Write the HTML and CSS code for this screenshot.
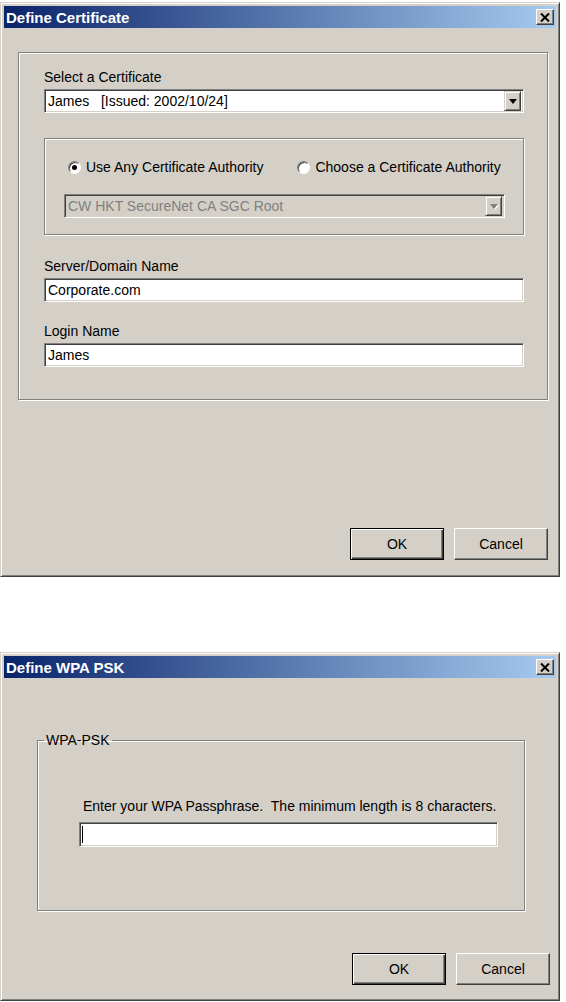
FILE: index.html
```html
<!DOCTYPE html>
<html lang="en">
<head>
  <meta charset="UTF-8">
  <title>Define Certificate / Define WPA PSK</title>
  <link rel="stylesheet" href="styles.css">
</head>
<body>

  <!-- certificate dialog -->
  <div class="window cert">
    <div class="titlebar">
      <span class="title">Define Certificate</span>
      <span class="close"><svg width="10" height="9" viewBox="0 0 10 9"><path d="M1 0.5 L9 8.5 M9 0.5 L1 8.5" stroke="#000" stroke-width="2"/></svg></span>
    </div>
    <div class="content">
      <div class="group main">
        <div class="label">Select a Certificate</div>
        <div class="combo">
          <span class="value">James&nbsp;&nbsp; [Issued: 2002/10/24]</span>
          <span class="drop"><i class="arrow"></i></span>
        </div>

        <div class="group ca">
          <div class="radios">
            <label class="radio"><span class="dot checked"></span>Use Any Certificate Authority</label>
            <label class="radio"><span class="dot"></span>Choose a Certificate Authority</label>
          </div>
          <div class="combo disabled">
            <span class="value">CW HKT SecureNet CA SGC Root</span>
            <span class="drop"><i class="arrow"></i></span>
          </div>
        </div>

        <div class="label gap">Server/Domain Name</div>
        <div class="field">Corporate.com</div>
        <div class="label gap-small">Login Name</div>
        <div class="field">James</div>
      </div>

      <div class="buttons">
        <button class="btn default">OK</button>
        <button class="btn">Cancel</button>
      </div>
    </div>
  </div>

  <!-- WPA PSK dialog -->
  <div class="window wpa">
    <div class="titlebar">
      <span class="title">Define WPA PSK</span>
      <span class="close"><svg width="10" height="9" viewBox="0 0 10 9"><path d="M1 0.5 L9 8.5 M9 0.5 L1 8.5" stroke="#000" stroke-width="2"/></svg></span>
    </div>
    <div class="content">
      <fieldset class="psk">
        <legend>WPA-PSK</legend>
        <div class="psk-body">
          <div class="hint">Enter your WPA Passphrase.&nbsp; The minimum length is 8 characters.</div>
          <div class="field wide"><span class="caret"></span></div>
        </div>
      </fieldset>

      <div class="buttons">
        <button class="btn default">OK</button>
        <button class="btn">Cancel</button>
      </div>
    </div>
  </div>

</body>
</html>
```

FILE: styles.css
```css
body {
  margin: 0;
  background-color: #fff;
  font-family: "Liberation Sans", Arial, sans-serif;
  font-size: 14px;
  color: #000;
}

.window {
  width: 560px;
  box-sizing: border-box;
  background-color: #d4d0c8;
  border: 1px solid;
  border-color: #d4d0c8 #404040 #404040 #d4d0c8;
  box-shadow: inset 1px 1px #fff, inset -1px -1px #808080;
  padding: 3px;
  display: flex;
  flex-direction: column;
}

.cert {
  height: 575px;
  margin-top: 2px;
}

.wpa {
  height: 349px;
  margin-top: 75px;
}

.titlebar {
  height: 22px;
  flex-shrink: 0;
  display: flex;
  align-items: center;
  justify-content: space-between;
  padding: 0 2px;
  background: linear-gradient(to right, #0a246a, #a6caf0);
}

.title {
  color: #fff;
  font-weight: bold;
  font-size: 15px;
}

.close {
  width: 18px;
  height: 16px;
  box-sizing: border-box;
  background-color: #d4d0c8;
  border: 1px solid;
  border-color: #fff #404040 #404040 #fff;
  box-shadow: inset -1px -1px #808080;
  display: flex;
  align-items: center;
  justify-content: center;
}

.content {
  flex: 1;
  display: flex;
  flex-direction: column;
}

.cert .content {
  padding: 24px 8px 13px 14px;
}

.wpa .content {
  padding: 0 6px 12px 0;
}

/* etched group boxes */
.group {
  border: 1px solid #808080;
  box-shadow: inset 1px 1px #fff, 1px 1px #fff;
  box-sizing: border-box;
}

.main {
  height: 348px;
  padding: 16px 23px 0 25px;
}

.ca {
  margin-top: 25px;
  padding: 20px 18px 16px 19px;
}

.label {
  line-height: 16px;
  margin-bottom: 4px;
}

.label.gap {
  margin-top: 23px;
}

.label.gap-small {
  margin-top: 21px;
}

/* sunken fields */
.combo,
.field {
  height: 24px;
  box-sizing: border-box;
  background-color: #fff;
  border: 1px solid;
  border-color: #808080 #fff #fff #808080;
  box-shadow: inset 1px 1px #404040, inset -1px -1px #d4d0c8;
  padding: 2px 2px 2px 3px;
  line-height: 19px;
  display: flex;
  align-items: center;
}

.combo .value {
  flex: 1;
}

.drop {
  width: 17px;
  height: 20px;
  box-sizing: border-box;
  background-color: #d4d0c8;
  border: 1px solid;
  border-color: #d4d0c8 #404040 #404040 #d4d0c8;
  box-shadow: inset 1px 1px #fff, inset -1px -1px #808080;
  display: flex;
  align-items: center;
  justify-content: center;
}

.arrow {
  width: 0;
  height: 0;
  border-left: 4px solid transparent;
  border-right: 4px solid transparent;
  border-top: 5px solid #000;
}

.combo.disabled {
  background-color: #d4d0c8;
  color: #808080;
}

.combo.disabled .arrow {
  border-top-color: #808080;
  filter: drop-shadow(1px 1px 0 #fff);
}

.radios {
  display: flex;
  gap: 34px;
  padding-left: 4px;
  margin-bottom: 19px;
  line-height: 16px;
}

.radio {
  display: flex;
  align-items: center;
  gap: 5px;
}

.dot {
  width: 13px;
  height: 13px;
  box-sizing: border-box;
  border-radius: 50%;
  border: 1px solid;
  border-color: #808080 #fff #fff #808080;
  box-shadow: inset 1px 1px #404040;
  background-color: #fff;
  display: flex;
  align-items: center;
  justify-content: center;
}

.dot.checked::after {
  content: "";
  width: 5px;
  height: 5px;
  border-radius: 50%;
  background-color: #000;
}

/* buttons */
.buttons {
  margin-top: auto;
  display: flex;
  justify-content: flex-end;
  gap: 10px;
}

.btn {
  width: 94px;
  height: 32px;
  font-family: inherit;
  font-size: 14px;
  color: #000;
  background-color: #d4d0c8;
  border: 1px solid;
  border-color: #fff #404040 #404040 #fff;
  box-shadow: inset -1px -1px #808080;
  padding: 0;
}

.btn.default {
  border-color: #000;
  box-shadow: inset 1px 1px #fff, inset -1px -1px #404040, inset -2px -2px #808080;
}

/* WPA-PSK group */
.psk {
  margin: 54px 0 0 33px;
  width: 488px;
  height: 179px;
  box-sizing: border-box;
  border: 1px solid #808080;
  box-shadow: inset 1px 1px #fff, 1px 1px #fff;
  padding: 0 0 0 6px;
  min-width: 0;
}

.psk legend {
  padding: 0 2px;
  line-height: 16px;
}

.psk-body {
  margin: 50px 0 0 35px;
}

.hint {
  line-height: 16px;
  padding-left: 4px;
  margin-bottom: 8px;
}

.field.wide {
  width: 419px;
  height: 25px;
}

.caret {
  width: 1px;
  height: 17px;
  background-color: #000;
  margin-left: -1px;
}
```
